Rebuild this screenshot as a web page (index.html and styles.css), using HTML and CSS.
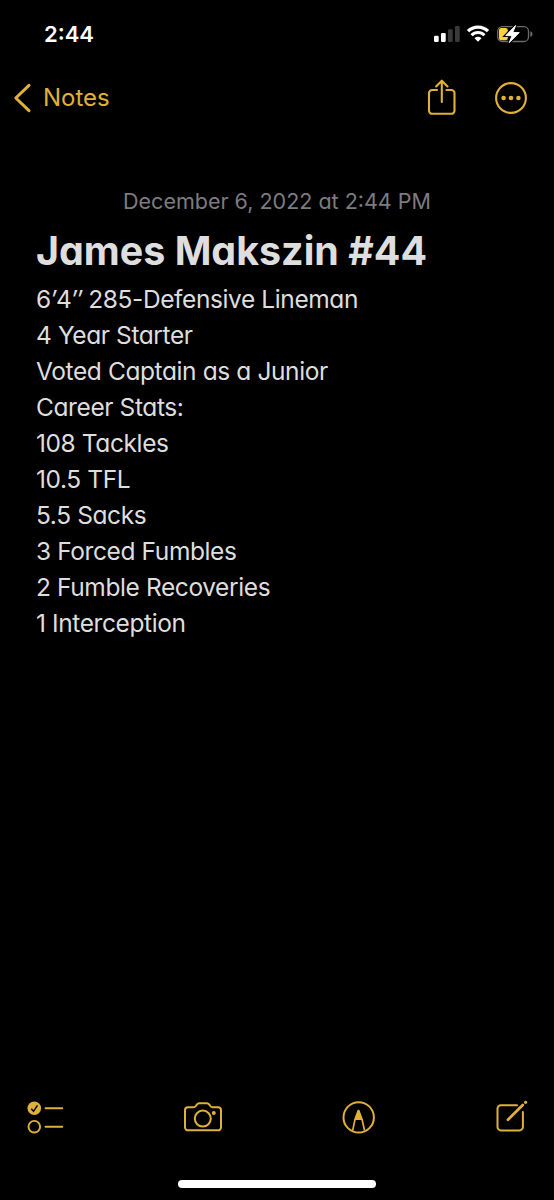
FILE: index.html
```
<!DOCTYPE html>
<html lang="en">
<head>
    <meta charset="utf-8">
    <meta name="viewport" content="width=device-width, initial-scale=1">
    <title>Notes</title>
    <link rel="stylesheet" href="styles.css">
</head>
<body>
    <div class="phone">
        <div class="statusBar">
            <span class="time">2:44</span>
            <div class="statusIcons">
                <svg class="signal" width="26" height="18" viewBox="0 0 26 18">
                    <rect x="0" y="10.7" width="4.7" height="6.3" rx="1.3" fill="#fff"/>
                    <rect x="7" y="8" width="4.7" height="9" rx="1.3" fill="#fff"/>
                    <rect x="14" y="4.3" width="4.7" height="12.7" rx="1.3" fill="#3a3a3a"/>
                    <rect x="21" y="1" width="4.7" height="16" rx="1.3" fill="#3a3a3a"/>
                </svg>
                <svg class="wifi" width="24" height="18" viewBox="0 0 24 18">
                    <path d="M2 6.2a14.2 14.2 0 0 1 20 0" fill="none" stroke="#fff" stroke-width="3.3"/>
                    <path d="M5.6 10.2a9 9 0 0 1 12.8 0" fill="none" stroke="#fff" stroke-width="3"/>
                    <path d="M8.5 13.3a5 5 0 0 1 7 0L12 16.8z" fill="#fff"/>
                </svg>
                <svg class="battery" width="36" height="20" viewBox="0 0 36 20">
                    <rect x=".7" y="2.7" width="30.8" height="14.8" rx="4.6" fill="none" stroke="#6c6c6c" stroke-width="1.3"/>
                    <path d="M33.3 7.2c2.9.7 2.9 5 0 5.7z" fill="#6c6c6c"/>
                    <rect x="2" y="4" width="8.8" height="12.2" rx="2.2" fill="#fdd03d"/>
                    <path d="M18.6 1.5 8.8 11.6h6.3l-2.8 7L22.2 8.6h-6.5z" fill="#000" stroke="#000" stroke-width="3"/>
                    <path d="M18.6 1.5 8.8 11.6h6.3l-2.8 7L22.2 8.6h-6.5z" fill="#fff" stroke="#fff" stroke-width="1" stroke-linejoin="round"/>
                </svg>
            </div>
        </div>

        <div class="navBar">
            <a class="backLink">
                <svg width="20" height="32" viewBox="0 0 20 32">
                    <path d="M17 3.4 3.8 16 17 28.6" fill="none" stroke="currentColor" stroke-width="3" stroke-linecap="round" stroke-linejoin="round"/>
                </svg>
                <span>Notes</span>
            </a>
            <div class="navActions">
                <svg class="shareIcon" width="30" height="38" viewBox="0 0 30 38" fill="none" stroke="currentColor" stroke-width="2.1" stroke-linecap="round" stroke-linejoin="round">
                    <path d="M10 12H5.1A3.1 3.1 0 0 0 2 15.1v17.6a3.1 3.1 0 0 0 3.1 3.1h19.3a3.1 3.1 0 0 0 3.1-3.1V15.1a3.1 3.1 0 0 0-3.1-3.1h-4.9"/>
                    <path d="M14.8 24V3M9.1 8.4l5.7-5.7 5.7 5.7"/>
                </svg>
                <svg width="34" height="34" viewBox="0 0 34 34">
                    <circle cx="17" cy="17" r="14.9" fill="none" stroke="currentColor" stroke-width="2.1"/>
                    <circle cx="9.6" cy="17" r="2.3" fill="currentColor"/>
                    <circle cx="17" cy="17" r="2.3" fill="currentColor"/>
                    <circle cx="24.4" cy="17" r="2.3" fill="currentColor"/>
                </svg>
            </div>
        </div>

        <main class="note">
            <p class="noteDate">December 6, 2022 at 2:44 PM</p>
            <h1 class="noteTitle">James Makszin #44</h1>
            <div class="noteBody">
                <p>6<i>′</i>4<i>″</i> 285-Defensive Lineman</p>
                <p>4 Year Starter</p>
                <p>Voted Captain as a Junior</p>
                <p>Career Stats:</p>
                <p>108 Tackles</p>
                <p>10.5 TFL</p>
                <p>5.5 Sacks</p>
                <p>3 Forced Fumbles</p>
                <p>2 Fumble Recoveries</p>
                <p>1 Interception</p>
            </div>
        </main>

        <div class="toolBar">
            <!-- checklist -->
            <svg width="38" height="36" viewBox="0 0 38 36">
                <circle cx="8.3" cy="8.3" r="6.8" fill="currentColor"/>
                <path d="M5.3 8.7l2.2 2.6 4-6" fill="none" stroke="#000" stroke-width="1.5"/>
                <circle cx="8.3" cy="26.7" r="5.8" fill="none" stroke="currentColor" stroke-width="1.9"/>
                <path d="M19.5 8.3h16.7M19.5 26.7h16.7" stroke="currentColor" stroke-width="2" stroke-linecap="round"/>
            </svg>
            <!-- camera -->
            <svg width="42" height="36" viewBox="0 0 42 36" fill="none" stroke="currentColor" stroke-width="2">
                <path d="M7 7.3h5.5c1.1 0 1.6-.4 2.3-1.3l1-1.4c.7-.9 1.300-1.300 2.400-1.300h7.700c1.100 0 1.700.4 2.400 1.300l1 1.400c.7.9 1.200 1.300 2.300 1.300H37a3 3 0 0 1 3 3v17a3 3 0 0 1-3 3H7a3 3 0 0 1-3-3v-17a3 3 0 0 1 3-3z"/>
                <circle cx="21.8" cy="18.6" r="8"/>
                <circle cx="32.8" cy="13" r="2" fill="currentColor" stroke="none"/>
            </svg>
            <!-- markup pen -->
            <svg width="36" height="36" viewBox="0 0 36 36">
                <circle cx="17.7" cy="17.4" r="15.2" fill="none" stroke="currentColor" stroke-width="2"/>
                <path d="M17.5 9.2l4 10.700h-8z" fill="currentColor"/>
                <path d="M17.500 10l-3.500 9.300-2.300 11M17.500 10l3.500 9.300 2.500 11" fill="none" stroke="currentColor" stroke-width="1.700" stroke-linejoin="round"/>
            </svg>
            <!-- compose -->
            <svg width="36" height="36" viewBox="0 0 36 36" fill="none" stroke="currentColor" stroke-width="2" stroke-linecap="round">
                <path d="M23 5.200H7a3.500 3.500 0 0 0-3.500 3.500v18.200A3.500 3.500 0 0 0 7 30.400h18.400a3.500 3.500 0 0 0 3.500-3.500V12"/>
                <path d="M13.900 19.800L28.800 5" stroke-width="2.700"/>
                <circle cx="31.600" cy="2.300" r="1.600" fill="currentColor" stroke="none"/>
            </svg>
        </div>
        <div class="homeIndicator"></div>
    </div>
</body>
</html>
```
FILE: styles.css
```
body {
    margin: 0;
    background-color: #000;
    font-family: Inter, "Liberation Sans", sans-serif;
    font-feature-settings: "cv11";
}

svg {
    display: block;
}

p, h1 {
    margin: 0;
}

.phone {
    display: flex;
    flex-direction: column;
    width: 554px;
    height: 1200px;
    overflow: hidden;
}

.statusBar {
    display: flex;
    justify-content: space-between;
    height: 68px;
    padding: 0 21px 0 44px;
    box-sizing: border-box;
}

.time {
    padding-top: 20px;
    font-size: 22px;
    line-height: 28px;
    font-weight: 600;
    color: #fff;
}

.statusIcons {
    display: flex;
    padding-top: 24px;
}

.signal {
    margin-top: 1px;
}

.wifi {
    margin: 1px 7px 0 6px;
}

.navBar {
    display: flex;
    justify-content: space-between;
    align-items: center;
    height: 60px;
    padding: 0 26px 0 12px;
    color: #e0b13a;
}

.backLink {
    display: flex;
    align-items: center;
    gap: 11px;
    font-size: 24px;
    line-height: 30px;
}

.navActions {
    display: flex;
    align-items: center;
    gap: 37px;
}

.shareIcon {
    margin-bottom: 3px;
}

.note {
    flex: 1;
    padding: 59px 36px 0;
    color: #dedede;
}

.noteDate {
    font-size: 21.5px;
    line-height: 28px;
    text-align: center;
    color: #7c7c80;
}

.noteTitle {
    margin-top: 12px;
    font-size: 39.4px;
    line-height: 48px;
    font-weight: 700;
    white-space: nowrap;
}

.noteBody {
    margin-top: 7px;
    font-size: 24.5px;
    line-height: 35.95px;
    letter-spacing: -0.4px;
}

.toolBar {
    display: flex;
    justify-content: space-between;
    padding: 0 24px 0 26px;
    height: 80px;
    color: #e0b13a;
}

.homeIndicator {
    width: 198px;
    height: 8px;
    margin: 0 auto 12px;
    border-radius: 4px;
    background-color: #fff;
}
```
